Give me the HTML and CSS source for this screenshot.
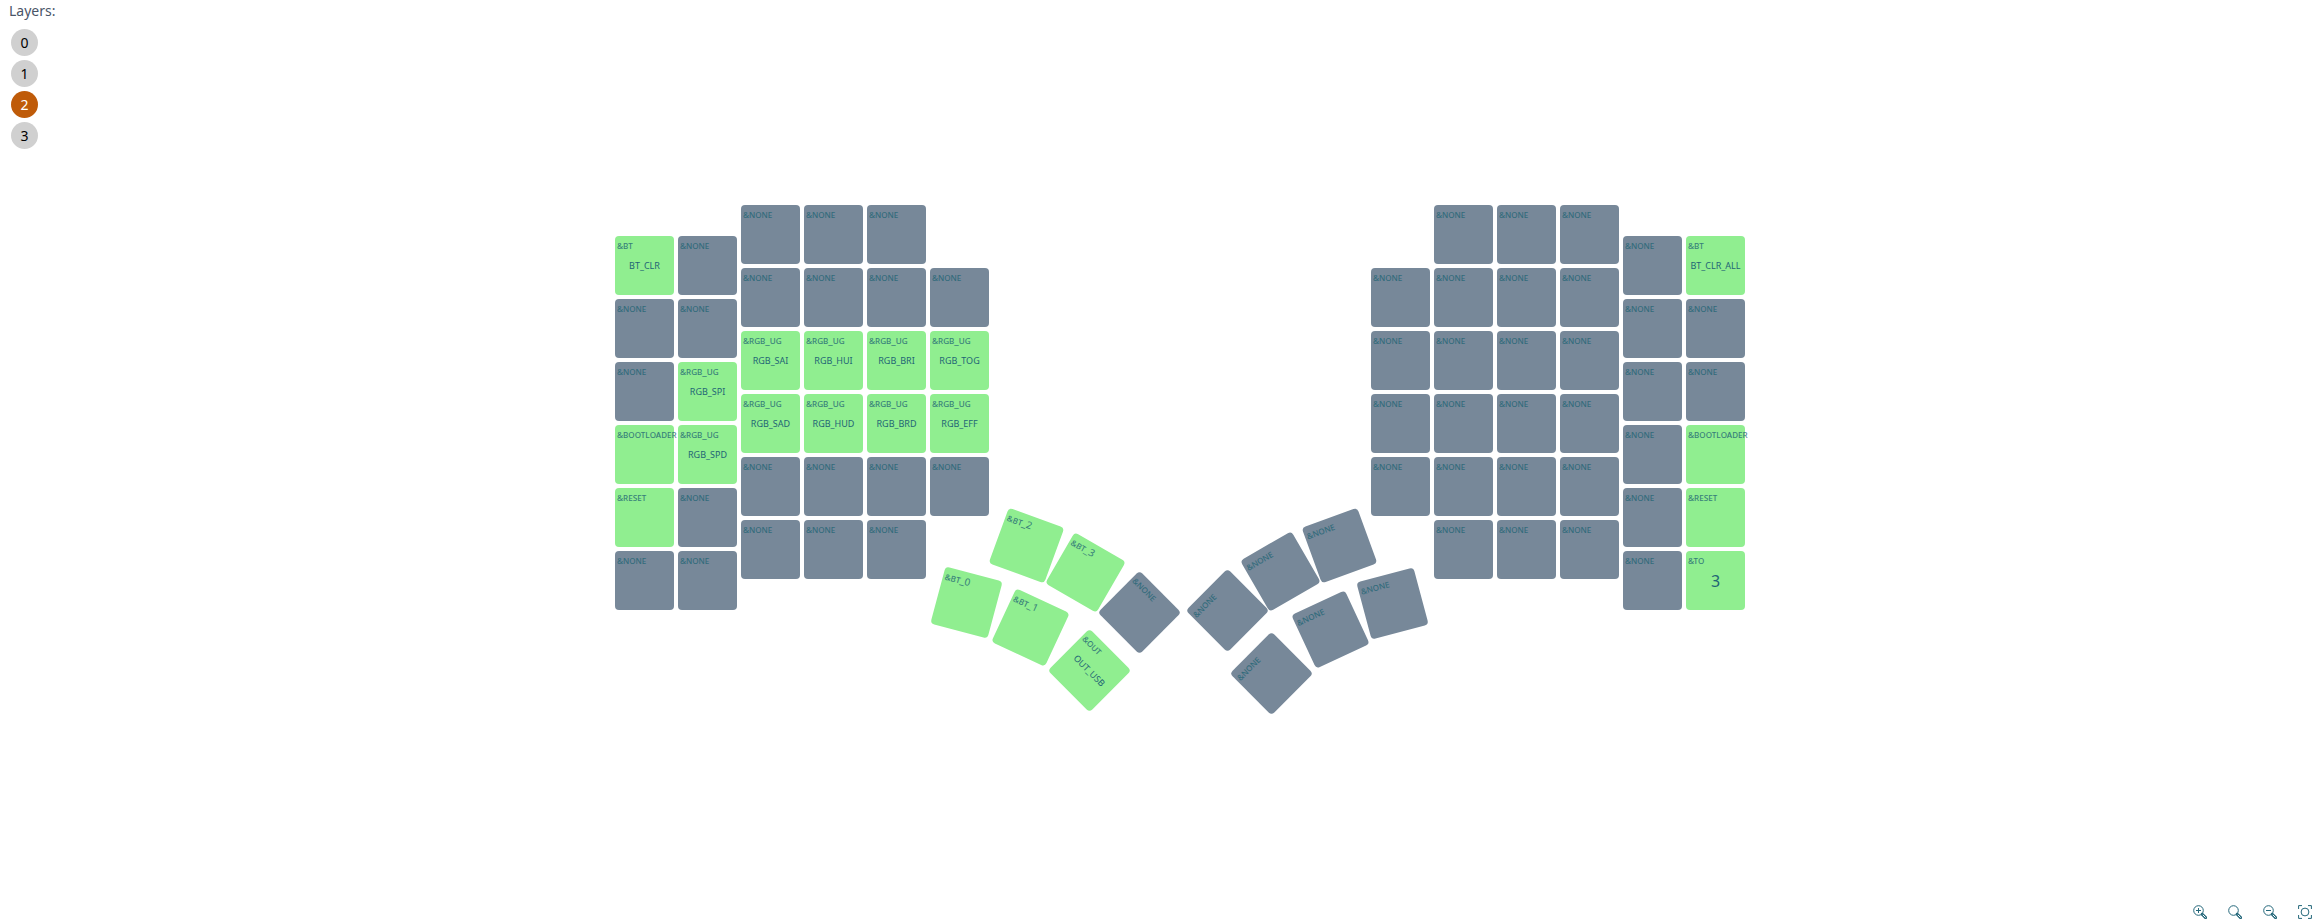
FILE: index.html
```
<!DOCTYPE html>
<html lang="en">
<head>
<meta charset="utf-8">
<title>Keymap</title>
<link rel="stylesheet" href="styles.css">
</head>
<body>
<aside class="layers">
  <p class="layers-title">Layers:</p>
  <ul class="layer-list">
    <li><button class="layer" type="button">0</button></li>
    <li><button class="layer" type="button">1</button></li>
    <li><button class="layer active" type="button" aria-pressed="true">2</button></li>
    <li><button class="layer" type="button">3</button></li>
  </ul>
</aside>
<main class="canvas">
  <div class="board" id="board"></div>
</main>
<div class="zoom-bar">
  <button class="zoom" type="button" aria-label="Zoom in"><svg viewBox="0 0 14 14"><circle cx="5.5" cy="5.5" r="4.8"/><path d="M3 5.5h5M5.5 3v5"/><path d="M9.2 9.2l3.4 3.4" class="handle"/><path d="M9.8 9.8l2.8 2.8" class="core"/></svg></button>
  <button class="zoom" type="button" aria-label="Reset zoom"><svg viewBox="0 0 14 14"><circle cx="5.5" cy="5.5" r="4.8"/><path d="M9.2 9.2l3.4 3.4" class="handle"/><path d="M9.8 9.8l2.8 2.8" class="core"/></svg></button>
  <button class="zoom" type="button" aria-label="Zoom out"><svg viewBox="0 0 14 14"><circle cx="5.5" cy="5.5" r="4.8"/><path d="M3 5.5h5"/><path d="M9.2 9.2l3.4 3.4" class="handle"/><path d="M9.8 9.8l2.8 2.8" class="core"/></svg></button>
  <button class="zoom" type="button" aria-label="Fit to screen"><svg viewBox="0 0 14 14"><circle cx="7" cy="7" r="3.9"/><path d="M.6 4V.6H4M10 .6h3.4V4M13.4 10v3.4H10M4 13.4H.6V10"/></svg></button>
</div>
<script src="keymap.js"></script>
</body>
</html>
```
FILE: keymap.js
```
const N = ['&none'];
const rgb = (p) => ['&rgb_ug', p];

const left = [
  [['&bt', 'BT_CLR'], N, N, ['&bootloader'], ['&reset'], N],
  [N, N, rgb('RGB_SPI'), rgb('RGB_SPD'), N, N],
  [N, N, rgb('RGB_SAI'), rgb('RGB_SAD'), N, N],
  [N, N, rgb('RGB_HUI'), rgb('RGB_HUD'), N, N],
  [N, N, rgb('RGB_BRI'), rgb('RGB_BRD'), N, N],
  [N, rgb('RGB_TOG'), rgb('RGB_EFF'), N]
];
const right = [
  [N, N, N, N],
  [N, N, N, N, N, N],
  [N, N, N, N, N, N],
  [N, N, N, N, N, N],
  [N, N, N, N, N, N],
  [['&bt', 'BT_CLR_ALL'], N, N, ['&bootloader'], ['&reset'], ['&to', '3']]
];
const offsets = ['low', 'low', '', '', '', 'inner'];

// Thumb cluster keys: x, y, rotation, binding
const thumbs = [
  [322, 368, 15, ['&bt_0']],
  [386, 393, 25, ['&bt_1']],
  [445, 436, 45, ['&out', 'OUT_USB']],
  [382, 311, 20, ['&bt_2']],
  [441, 338, 30, ['&bt_3']],
  [495, 378, 45, N],
  [583, 376, -45, N],
  [636, 337, -30, N],
  [695, 311, -20, N],
  [627, 439, -45, N],
  [686, 395, -25, N],
  [748, 369, -15, N]
];

function makeLabel(text) {
  const label = document.createElement('span');
  label.className = 'behavior';
  const [, name, digits] = text.match(/^(\D+)(\d*)$/);
  label.textContent = name;
  if (digits) {
    const index = document.createElement('span');
    index.className = 'index';
    index.textContent = digits;
    label.append(index);
  }
  return label;
}

function makeKey([behavior, param]) {
  const key = document.createElement('div');
  key.className = behavior === '&none' ? 'key' : 'key bound';
  key.append(makeLabel(behavior));
  if (param) {
    const value = document.createElement('span');
    value.className = param.length === 1 ? 'param big' : 'param';
    value.textContent = param;
    key.append(value);
  }
  return key;
}

function makeHalf(columns, offsets) {
  const half = document.createElement('div');
  half.className = 'half';
  columns.forEach((keys, i) => {
    const column = document.createElement('div');
    column.className = `column ${offsets[i]}`;
    column.append(...keys.map(makeKey));
    half.append(column);
  });
  return half;
}

const board = document.getElementById('board');
board.append(makeHalf(left, offsets), makeHalf(right, [...offsets].reverse()));
thumbs.forEach(([x, y, angle, binding]) => {
  const key = makeKey(binding);
  key.classList.add('thumb');
  key.style.left = `${x}px`;
  key.style.top = `${y}px`;
  key.style.transform = `rotate(${angle}deg)`;
  board.append(key);
});
```
FILE: styles.css
```
* { box-sizing: border-box; }

body {
  margin: 0;
  min-height: 100vh;
  display: flex;
  background: #fff;
  color: #4a5568;
  font-family: "Noto Sans", "Open Sans", sans-serif;
  font-size: 14px;
  overflow: hidden;
}

.layers {
  width: 48px;
  flex: none;
}

.layers-title {
  margin: 0;
  padding-left: 9px;
  line-height: 22px;
  white-space: nowrap;
}

.layer-list {
  list-style: none;
  margin: 0;
  padding: 7px 0 0 11px;
  display: flex;
  flex-direction: column;
  gap: 4px;
}

.layer {
  display: block;
  width: 27px;
  height: 27px;
  padding: 0;
  border: 0;
  border-radius: 50%;
  background: #d0d0d0;
  color: #000;
  font: inherit;
  line-height: 27px;
}

.layer.active {
  background: #bf5b09;
  color: #fff;
}

.canvas {
  flex: 1;
  display: flex;
  align-items: center;
  justify-content: center;
}

.board {
  position: relative;
  display: flex;
  gap: 382px;
  padding-bottom: 107px;
}

.half {
  display: flex;
  gap: 4px;
}

.column {
  display: flex;
  flex-direction: column;
  gap: 4px;
}

.low { padding-top: 31px; }

.inner { padding-top: 63px; }

.key {
  position: relative;
  width: 59px;
  height: 59px;
  border-radius: 4px;
  background: #778899;
  color: #1f6575;
  display: flex;
  align-items: center;
  justify-content: center;
}

.bound { background: #90ee90; }

.behavior {
  position: absolute;
  top: 2px;
  left: 2px;
  font-size: 10px;
  line-height: 14px;
  font-variant: small-caps;
  opacity: .8;
}

.index { font-variant: normal; }

.param {
  font-size: 9px;
  line-height: 14px;
}

.big { font-size: 16px; }

.thumb { position: absolute; }

.zoom-bar {
  position: fixed;
  right: 0;
  bottom: 3px;
  display: flex;
  gap: 21px;
}

.zoom {
  padding: 0;
  border: 0;
  background: none;
  color: #24677a;
}

.zoom svg {
  display: block;
  width: 14px;
  height: 14px;
  fill: none;
  stroke: currentColor;
  stroke-width: 1;
}

.zoom .handle {
  stroke-width: 3;
  stroke-linecap: round;
}

.zoom .core {
  stroke: #fff;
  stroke-width: 1;
}
```
